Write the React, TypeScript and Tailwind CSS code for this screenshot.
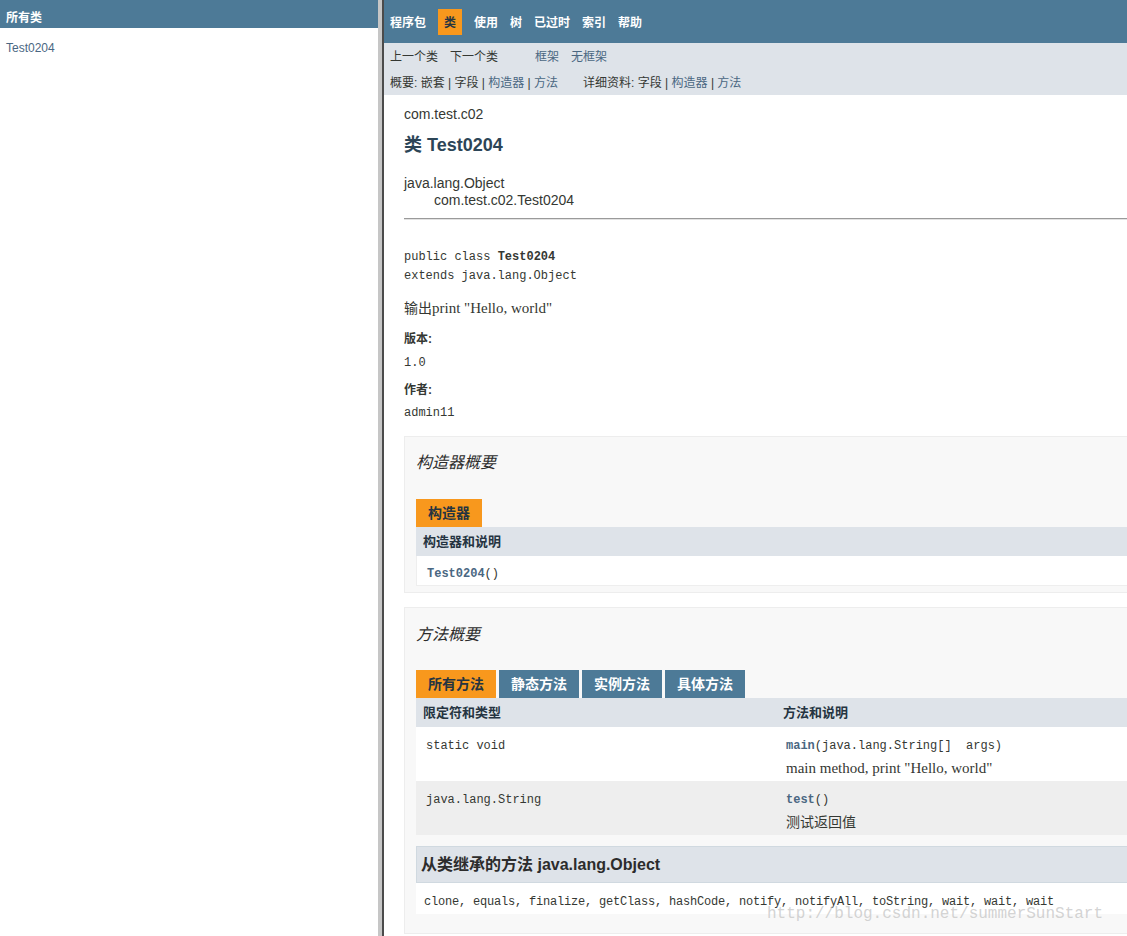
import React from "react";

const SANS = "font-['Liberation_Sans','Noto_Sans_CJK_SC',sans-serif]";
const MONO = "font-['Liberation_Mono','Noto_Sans_CJK_SC',monospace]";
const SERIF = "font-['Liberation_Serif','Noto_Sans_CJK_SC',serif]";

const navItems = ["使用", "树", "已过时", "索引", "帮助"];

const methodTabs = [
  { label: "所有方法", active: true },
  { label: "静态方法", active: false },
  { label: "实例方法", active: false },
  { label: "具体方法", active: false },
];

function Tab({ label, active }: { label: string; active: boolean }) {
  return (
    <div
      className={
        active
          ? "h-[28px] px-[12px] pt-[1px] flex items-center bg-[#F8981D] text-[#253441] text-[14px] font-bold"
          : "h-[28px] px-[12px] pt-[1px] flex items-center bg-[#4D7A97] text-white text-[14px] font-bold"
      }
    >
      {label}
    </div>
  );
}

const App: React.FC = () => {
  return (
    <div className={`${SANS} flex h-screen w-full overflow-hidden bg-white text-[#353833]`}>
      {/* left frame */}
      <div className="w-[378px] shrink-0 flex flex-col">
        <div className="h-[28px] bg-[#4D7A97] pl-[6px] pt-[11px] text-white text-[12px] leading-[14px] font-bold">
          所有类
        </div>
        <div className="pl-[6px] pt-[13px] text-[12px] leading-[14px] text-[#4A6782]">Test0204</div>
      </div>

      {/* frame divider */}
      <div className="w-[4px] shrink-0 bg-[#c6c6c6]" />
      <div className="w-[2px] shrink-0 bg-[#4b4b4b]" />

      {/* right frame */}
      <div className="flex-1 min-w-0 overflow-hidden flex flex-col">
        <div className="h-[43px] shrink-0 bg-[#4D7A97] flex items-center pl-[6px] pt-[1px] gap-[12px] text-white text-[12px] font-bold">
          <span className="pt-[2px]">程序包</span>
          <span className="h-[26px] px-[6px] pt-[2px] flex items-center bg-[#F8981D] text-[#253441]">类</span>
          {navItems.map((n) => (
            <span key={n} className="pt-[2px]">
              {n}
            </span>
          ))}
        </div>

        <div className="h-[52px] shrink-0 bg-[#dee3e9] pl-[6px] pt-[1px] text-[12px] whitespace-nowrap">
          <div className="h-[26px] flex items-center gap-[12px]">
            <span>上一个类</span>
            <span>下一个类</span>
            <span className="ml-[25px] text-[#4A6782]">框架</span>
            <span className="text-[#4A6782]">无框架</span>
          </div>
          <div className="h-[25px] flex items-center gap-[25px]">
            <span>
              概要:&nbsp;嵌套&nbsp;|&nbsp;字段&nbsp;|&nbsp;<span className="text-[#4A6782]">构造器</span>&nbsp;|&nbsp;
              <span className="text-[#4A6782]">方法</span>
            </span>
            <span>
              详细资料:&nbsp;字段&nbsp;|&nbsp;<span className="text-[#4A6782]">构造器</span>&nbsp;|&nbsp;
              <span className="text-[#4A6782]">方法</span>
            </span>
          </div>
        </div>

        <div className="pl-[20px] flex flex-col">
          <div className="mt-[9px] text-[14px] leading-[20px]">com.test.c02</div>
          <h2 className="mt-[9px] text-[18px] leading-[24px] font-bold text-[#2c4557]">类 Test0204</h2>

          <div className="mt-[18px] text-[14px] leading-[17px]">
            <div>java.lang.Object</div>
            <div className="pl-[30px]">com.test.c02.Test0204</div>
          </div>

          <div className="mt-[9px] w-[900px] border-t border-[#9a9a9a] border-b border-b-[#e2e2e2]" />

          <div className={`${MONO} mt-[28px] text-[12px] leading-[19px]`}>
            <div>
              public class <span className="font-bold">Test0204</span>
            </div>
            <div>extends java.lang.Object</div>
          </div>

          <div className="mt-[12px] text-[14px] leading-[20px]">
            输出<span className={`${SERIF} text-[15px]`}>print "Hello, world"</span>
          </div>

          <div className="mt-[13px] text-[12px] leading-[16px] font-bold">版本:</div>
          <div className={`${MONO} mt-[8px] text-[12px] leading-[16px]`}>1.0</div>
          <div className="mt-[11px] text-[12px] leading-[16px] font-bold">作者:</div>
          <div className={`${MONO} mt-[7px] text-[12px] leading-[16px]`}>admin11</div>

          {/* constructor summary */}
          <div className="mt-[15px] w-[900px] border border-[#ededed] bg-[#f8f8f8] pl-[11px] pt-[16px] pb-[6px]">
            <h3 className="text-[16px] leading-[20px] italic text-[#2c2c2c]">构造器概要</h3>
            <div className="mt-[26px] flex">
              <Tab label="构造器" active />
            </div>
            <div className="w-[860px]">
              <div className="h-[29px] bg-[#dee3e9] pl-[7px] pt-[1px] flex items-center text-[13px] font-bold text-[#253441]">
                构造器和说明
              </div>
              <div className={`${MONO} h-[30px] bg-white border border-t-0 border-[#eeeeee] pl-[10px] pt-[11px] text-[12px] leading-[14px]`}>
                <span className="font-bold text-[#4A6782]">Test0204</span>()
              </div>
            </div>
          </div>

          {/* method summary */}
          <div className="mt-[14px] w-[900px] border border-[#ededed] bg-[#f8f8f8] pl-[11px] pt-[17px] pb-[19px]">
            <h3 className="text-[16px] leading-[20px] italic text-[#2c2c2c]">方法概要</h3>
            <div className="mt-[25px] flex gap-[3px]">
              {methodTabs.map((t) => (
                <Tab key={t.label} label={t.label} active={t.active} />
              ))}
            </div>
            <div className="w-[860px]">
              <div className="h-[29px] bg-[#dee3e9] pt-[1px] flex items-center text-[13px] font-bold text-[#253441]">
                <div className="w-[360px] pl-[7px]">限定符和类型</div>
                <div className="pl-[7px]">方法和说明</div>
              </div>
              <div className="h-[54px] bg-white flex">
                <div className={`${MONO} w-[360px] pl-[10px] pt-[12px] text-[12px] leading-[14px]`}>static void</div>
                <div className="pl-[10px] pt-[12px]">
                  <div className={`${MONO} text-[12px] leading-[14px] whitespace-pre`}>
                    <span className="font-bold text-[#4A6782]">main</span>(java.lang.String[]  args)
                  </div>
                  <div className={`${SERIF} mt-[6px] text-[15px] leading-[18px]`}>main method, print "Hello, world"</div>
                </div>
              </div>
              <div className="h-[54px] bg-[#eeeeee] flex">
                <div className={`${MONO} w-[360px] pl-[10px] pt-[12px] text-[12px] leading-[14px]`}>java.lang.String</div>
                <div className="pl-[10px] pt-[12px]">
                  <div className={`${MONO} text-[12px] leading-[14px]`}>
                    <span className="font-bold text-[#4A6782]">test</span>()
                  </div>
                  <div className="mt-[6px] text-[14px] leading-[18px]">测试返回值</div>
                </div>
              </div>

              <div className="mt-[11px] h-[37px] bg-[#dee3e9] border border-[#d0d9e0] pl-[4px] pt-[1px] flex items-center text-[16px] font-bold text-[#2c2c2c]">
                从类继承的方法 java.lang.Object
              </div>
              <div className={`${MONO} h-[31px] bg-white pl-[8px] pt-[12px] text-[12px] leading-[14px] tracking-[-0.2px]`}>
                clone, equals, finalize, getClass, hashCode, notify, notifyAll, toString, wait, wait, wait
              </div>
            </div>
          </div>
        </div>
      </div>

      {/* blog watermark */}
      <div className={`${MONO} absolute left-[767px] top-[904px] text-[16px] leading-[20px] text-[#c8c8c8]/80 pointer-events-none`}>
        http://blog.csdn.net/summerSunStart
      </div>
    </div>
  );
};

export default App;
